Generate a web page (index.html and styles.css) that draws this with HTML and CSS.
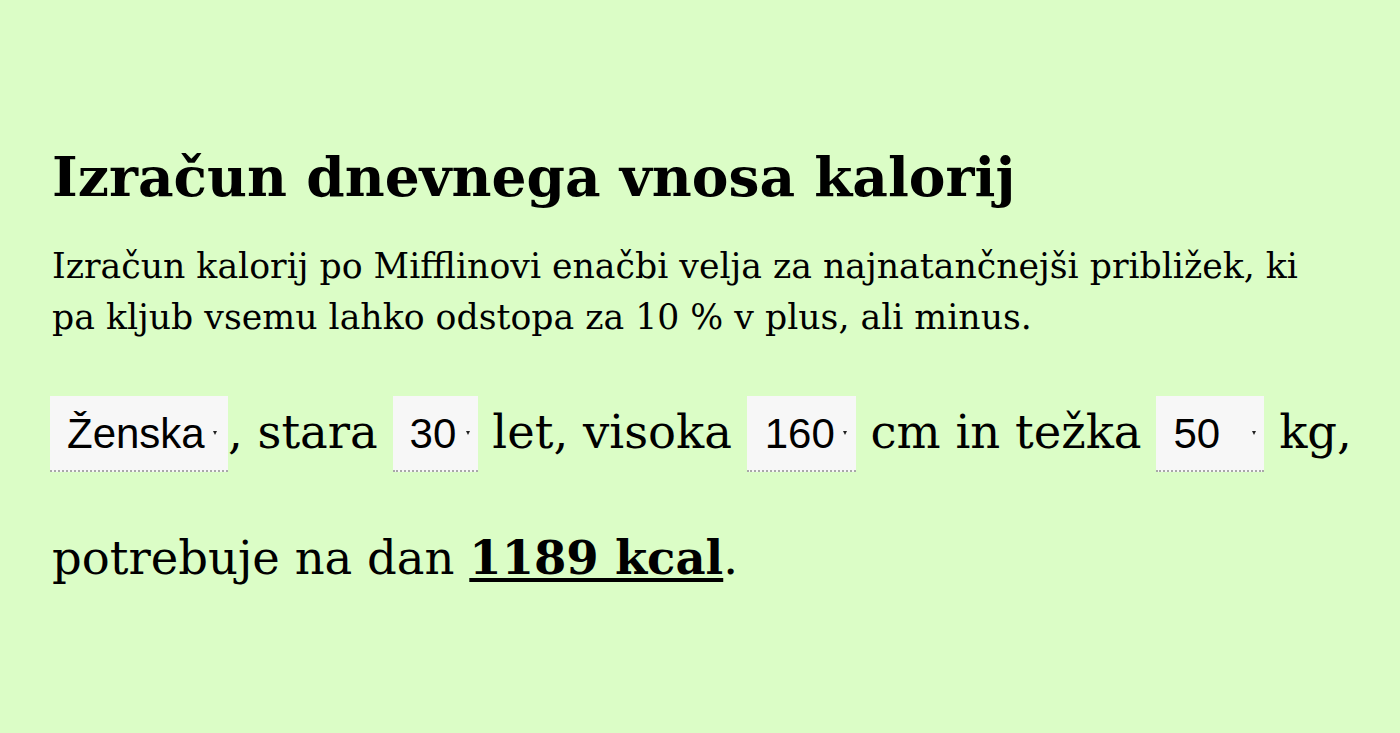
FILE: index.html
```html
<!DOCTYPE html>
<html lang="sl">
<head>
<meta charset="utf-8">
<title>Izračun dnevnega vnosa kalorij</title>
<link rel="stylesheet" href="styles.css">
</head>
<body>
<main class="page">
  <h1 class="title">Izračun dnevnega vnosa kalorij</h1>
  <p class="intro">Izračun kalorij po Mifflinovi enačbi velja za najnatančnejši približek, ki pa kljub vsemu lahko odstopa za 10 % v plus, ali minus.</p>
  <p class="calc"><span class="sel sel-gender"><select class="field"><option>Ženska</option></select></span>, stara <span class="sel sel-age"><select class="field"><option>30</option></select></span> let, visoka <span class="sel sel-height"><select class="field"><option>160</option></select></span> cm in težka <span class="sel sel-weight"><select class="field"><option>50</option></select></span> kg, potrebuje na dan <strong class="result">1189 kcal</strong>.</p>
</main>
</body>
</html>
```
FILE: styles.css
```css
html, body {
  margin: 0;
  padding: 0;
  background: #dbfdc6;
}
body {
  font-family: "DejaVu Serif", Georgia, serif;
  color: #000;
}
.page {
  padding: 145px 40px 0 52px;
}
.title {
  margin: 0 0 32px;
  font-size: 55px;
  line-height: 64px;
  font-weight: bold;
}
.intro {
  max-width: 1265px;
  margin: 0 0 27px;
  font-size: 34.7px;
  line-height: 51px;
}
.calc {
  margin: 0;
  font-size: 46.5px;
  line-height: 125px;
}
.sel {
  position: relative;
  display: inline-flex;
  line-height: normal;
}
.sel-gender { margin-left: -2px; }
.sel::after {
  content: "";
  position: absolute;
  right: 8px;
  top: 35px;
  border-left: 2.5px solid transparent;
  border-right: 2.5px solid transparent;
  border-top: 4px solid #222;
  pointer-events: none;
}
.sel-gender::after { right: 11px; }
.sel-height::after { right: 9px; }
.field {
  -webkit-appearance: none;
  appearance: none;
  box-sizing: border-box;
  height: 76px;
  margin: 0;
  padding: 15px 0 13px 17px;
  border: 0;
  border-bottom: 2px dotted #a8a8a8;
  border-radius: 0;
  background: #f7f7f7;
  color: #000;
  font-family: "Liberation Sans", Arial, sans-serif;
  font-size: 42px;
  line-height: 46px;
}
.sel-gender .field { width: 178px; }
.sel-age .field { width: 85px; }
.sel-height .field { width: 109px; padding-left: 18px; }
.sel-weight .field { width: 108px; }
.result {
  font-weight: bold;
  text-decoration: underline;
  text-decoration-thickness: 4px;
  text-underline-offset: 4px;
}
```
